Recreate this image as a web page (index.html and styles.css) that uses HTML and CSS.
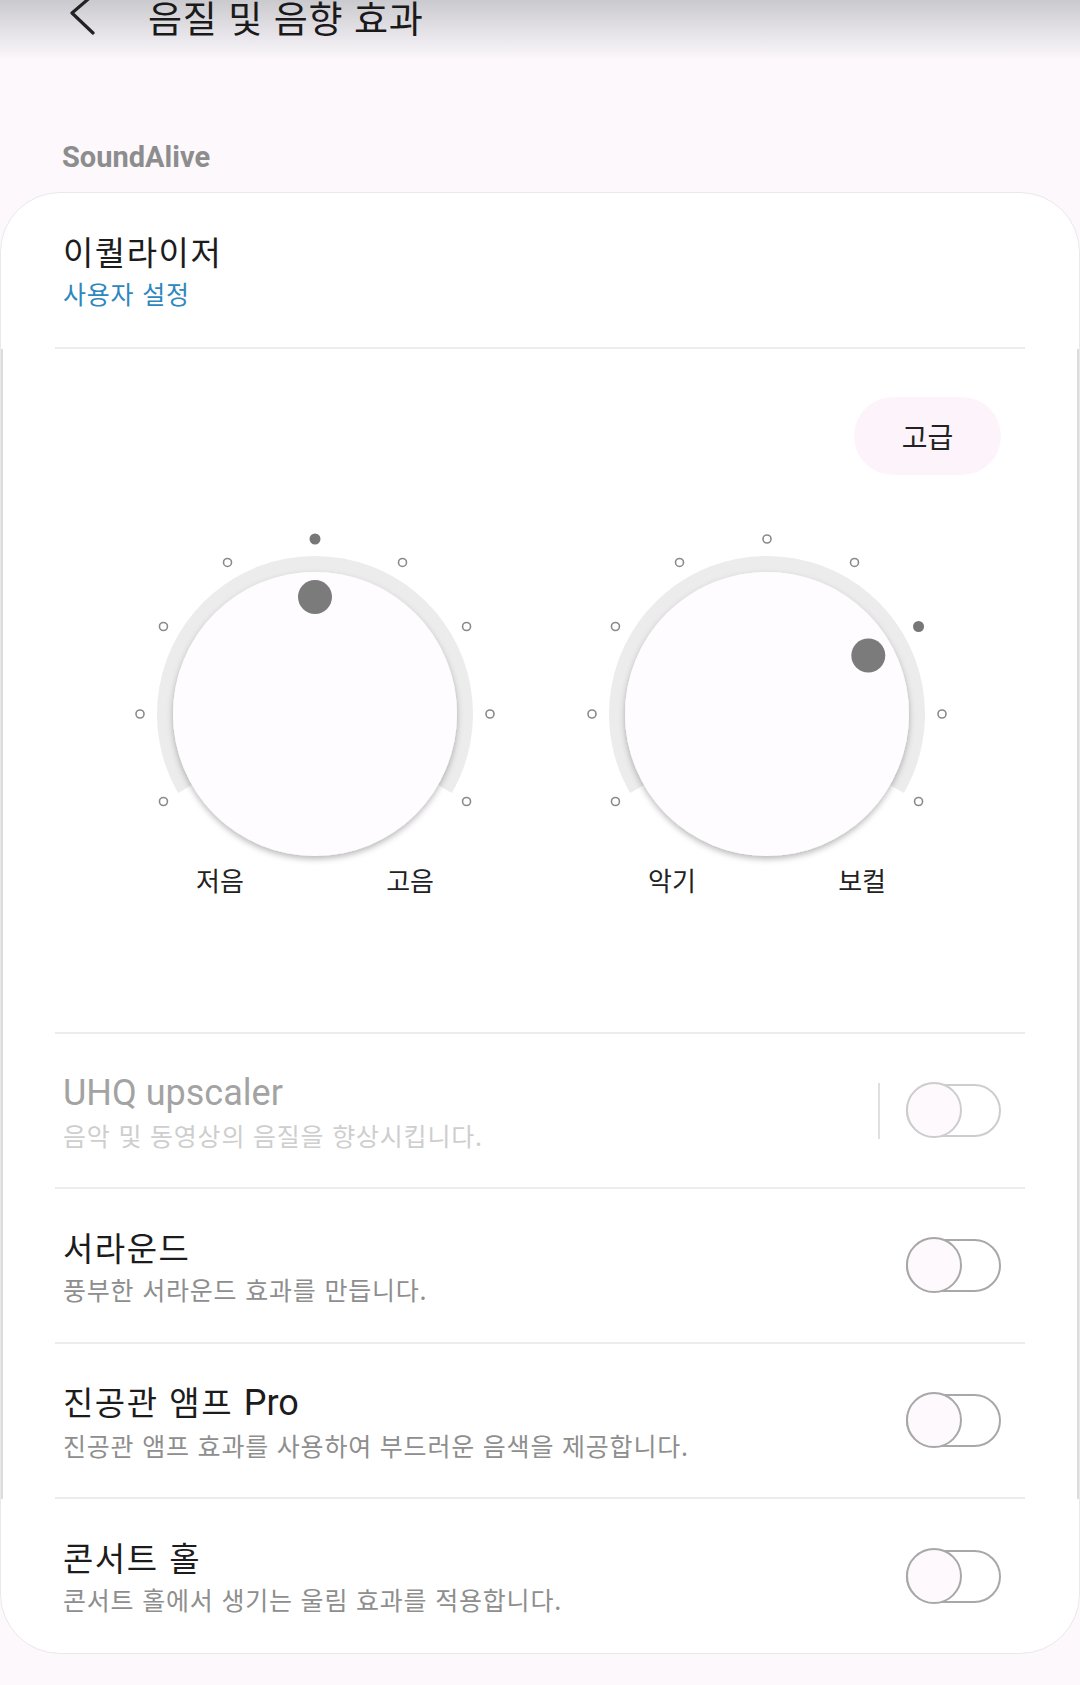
FILE: index.html
```html
<!DOCTYPE html>
<html lang="ko">
<head>
    <meta charset="UTF-8">
    <meta name="viewport" content="width=device-width, initial-scale=1.0">
    <title>음질 및 음향 효과</title>
    <link rel="stylesheet" href="styles.css">
</head>
<body>
    <div class="appbar">
        <svg class="back" width="36" height="40" viewBox="0 0 36 40">
            <path d="M33 0 L12 18 L33 38" fill="none" stroke="#222" stroke-width="3.2" stroke-linecap="round" stroke-linejoin="round"/>
        </svg>
        <h1 class="title">음질 및 음향 효과</h1>
    </div>

    <div class="section-label">SoundAlive</div>

    <div class="card">
        <div class="row eq-row">
            <div class="text">
                <div class="row-title">이퀄라이저</div>
                <div class="row-sub link">사용자 설정</div>
            </div>
        </div>

        <div class="scroll">
            <div class="knob-panel">
                <div class="panel-top">
                    <button class="pill">고급</button>
                </div>
                <div class="knobs">
                    <div class="knob">
                        <svg width="370" height="335" viewBox="0 0 370 335">
                            <defs>
                                <filter id="knob-shadow" x="-10%" y="-10%" width="120%" height="125%">
                                    <feDropShadow dx="0" dy="3" stdDeviation="3" flood-color="#000" flood-opacity="0.28"/>
                                </filter>
                            </defs>
                            <path d="M55.1 260 A150 150 0 1 1 314.9 260" fill="none" stroke="#ececec" stroke-width="16"/>
                            <circle cx="185" cy="185" r="142" fill="#fefcfe" filter="url(#knob-shadow)"/>
                            <circle cx="185" cy="68" r="17" fill="#7b7b7b"/>
                            <g fill="#fff" stroke="#8a8a8a" stroke-width="1.6">
                                <circle cx="33.45" cy="272.5" r="4"/>
                                <circle cx="10" cy="185" r="4"/>
                                <circle cx="33.45" cy="97.5" r="4"/>
                                <circle cx="97.5" cy="33.45" r="4"/>
                                <circle cx="272.5" cy="33.45" r="4"/>
                                <circle cx="336.55" cy="97.5" r="4"/>
                                <circle cx="360" cy="185" r="4"/>
                                <circle cx="336.55" cy="272.5" r="4"/>
                            </g>
                            <circle cx="185" cy="10" r="5.5" fill="#777"/>
                        </svg>
                        <div class="knob-labels"><span>저음</span><span>고음</span></div>
                    </div>
                    <div class="knob">
                        <svg width="370" height="335" viewBox="0 0 370 335">
                            <path d="M55.1 260 A150 150 0 1 1 314.9 260" fill="none" stroke="#ececec" stroke-width="16"/>
                            <circle cx="185" cy="185" r="142" fill="#fefcfe" filter="url(#knob-shadow)"/>
                            <circle cx="286.3" cy="126.5" r="17" fill="#7b7b7b"/>
                            <g fill="#fff" stroke="#8a8a8a" stroke-width="1.6">
                                <circle cx="33.45" cy="272.5" r="4"/>
                                <circle cx="10" cy="185" r="4"/>
                                <circle cx="33.45" cy="97.5" r="4"/>
                                <circle cx="97.5" cy="33.45" r="4"/>
                                <circle cx="185" cy="10" r="4"/>
                                <circle cx="272.5" cy="33.45" r="4"/>
                                <circle cx="360" cy="185" r="4"/>
                                <circle cx="336.55" cy="272.5" r="4"/>
                            </g>
                            <circle cx="336.55" cy="97.5" r="5.5" fill="#777"/>
                        </svg>
                        <div class="knob-labels"><span>악기</span><span>보컬</span></div>
                    </div>
                </div>
            </div>

            <div class="row disabled">
                <div class="text">
                    <div class="row-title"><span class="en">UHQ upscaler</span></div>
                    <div class="row-sub">음악 및 동영상의 음질을 향상시킵니다.</div>
                </div>
                <div class="vsep"></div>
                <div class="switch"></div>
            </div>

            <div class="row">
                <div class="text">
                    <div class="row-title">서라운드</div>
                    <div class="row-sub">풍부한 서라운드 효과를 만듭니다.</div>
                </div>
                <div class="switch"></div>
            </div>

            <div class="row">
                <div class="text">
                    <div class="row-title">진공관 앰프 <span class="en">Pro</span></div>
                    <div class="row-sub">진공관 앰프 효과를 사용하여 부드러운 음색을 제공합니다.</div>
                </div>
                <div class="switch"></div>
            </div>
        </div>

        <div class="row last">
            <div class="text">
                <div class="row-title">콘서트 홀</div>
                <div class="row-sub">콘서트 홀에서 생기는 울림 효과를 적용합니다.</div>
            </div>
            <div class="switch"></div>
        </div>
    </div>
</body>
</html>
```

FILE: styles.css
```css
body {
    margin: 0;
    width: 1080px;
    height: 1685px;
    overflow: hidden;
    background-color: #fcf8fc;
    font-family: "Noto Sans CJK KR", sans-serif;
    color: #1c1c1c;
}
.en {
    font-family: Roboto, sans-serif;
    font-size: 36px;
    letter-spacing: 0;
}
.appbar {
    display: flex;
    align-items: flex-start;
    height: 60px;
    background: linear-gradient(#cac9ce, #e3e1e6 30px, #fcf8fc 60px);
}
.back {
    flex: none;
    margin: -5px 0 0 60px;
}
.title {
    margin: -3px 0 0 52px;
    font-size: 37px;
    font-weight: 400;
    letter-spacing: 0.6px;
    line-height: 40px;
    color: #1a1a1a;
}
.section-label {
    margin: 81px 0 19px 62px;
    font-family: Roboto, sans-serif;
    font-size: 29px;
    font-weight: 700;
    line-height: 32px;
    color: #8d8d8d;
}
.card {
    height: 1462px;
    box-sizing: border-box;
    background: #fff;
    border: 1px solid #ebe7eb;
    border-radius: 60px;
    overflow: hidden;
}
.scroll {
    box-shadow: inset 2px 0 0 #dcdcdc, inset -2px 0 0 #dcdcdc;
}
.row {
    display: flex;
    align-items: center;
    height: 155px;
    box-sizing: border-box;
    margin: 0 54px;
    padding: 0 24px 0 8px;
    border-bottom: 2px solid #ececec;
}
.eq-row {
    height: 156px;
}
.row.last {
    height: 154px;
    border-bottom: none;
}
.text {
    flex: 1;
}
.row-title {
    font-size: 33px;
    letter-spacing: 1.5px;
    line-height: 42px;
}
.row-sub {
    margin-top: 4px;
    font-size: 25px;
    letter-spacing: 0.8px;
    line-height: 34px;
    color: #8e8e8e;
}
.row-sub.link {
    color: #2f87bf;
}
.disabled .row-title {
    color: #a3a3a3;
}
.disabled .row-sub {
    color: #cecece;
}
.vsep {
    flex: none;
    width: 2px;
    height: 56px;
    margin-right: 26px;
    background: #e0e0e0;
}
.switch {
    position: relative;
    flex: none;
    width: 95px;
    height: 53px;
    box-sizing: border-box;
    border: 2.5px solid #a8a8a8;
    border-radius: 27px;
}
.switch::before {
    content: "";
    position: absolute;
    left: -2.5px;
    top: -4px;
    width: 56px;
    height: 56px;
    box-sizing: border-box;
    border: 2.5px solid #a8a8a8;
    border-radius: 50%;
    background: #fdf9fd;
}
.disabled .switch,
.disabled .switch::before {
    border-color: #cdcdcd;
}
.knob-panel {
    height: 685px;
    box-sizing: border-box;
    margin: 0 54px;
    padding-top: 48px;
    border-bottom: 2px solid #ececec;
}
.panel-top {
    display: flex;
    justify-content: flex-end;
    padding-right: 24px;
}
.pill {
    width: 147px;
    height: 78px;
    border: none;
    border-radius: 39px;
    background: #fcf4fa;
    font-family: inherit;
    font-size: 28px;
    color: #222;
}
.knobs {
    display: flex;
    gap: 82px;
    margin-top: 54px;
    padding-left: 75px;
}
.knob {
    width: 370px;
}
.knob svg {
    display: block;
    overflow: visible;
}
.knob-labels {
    display: flex;
    justify-content: space-between;
    padding: 0 66px;
    font-size: 26px;
    line-height: 32px;
    color: #222;
}
```
